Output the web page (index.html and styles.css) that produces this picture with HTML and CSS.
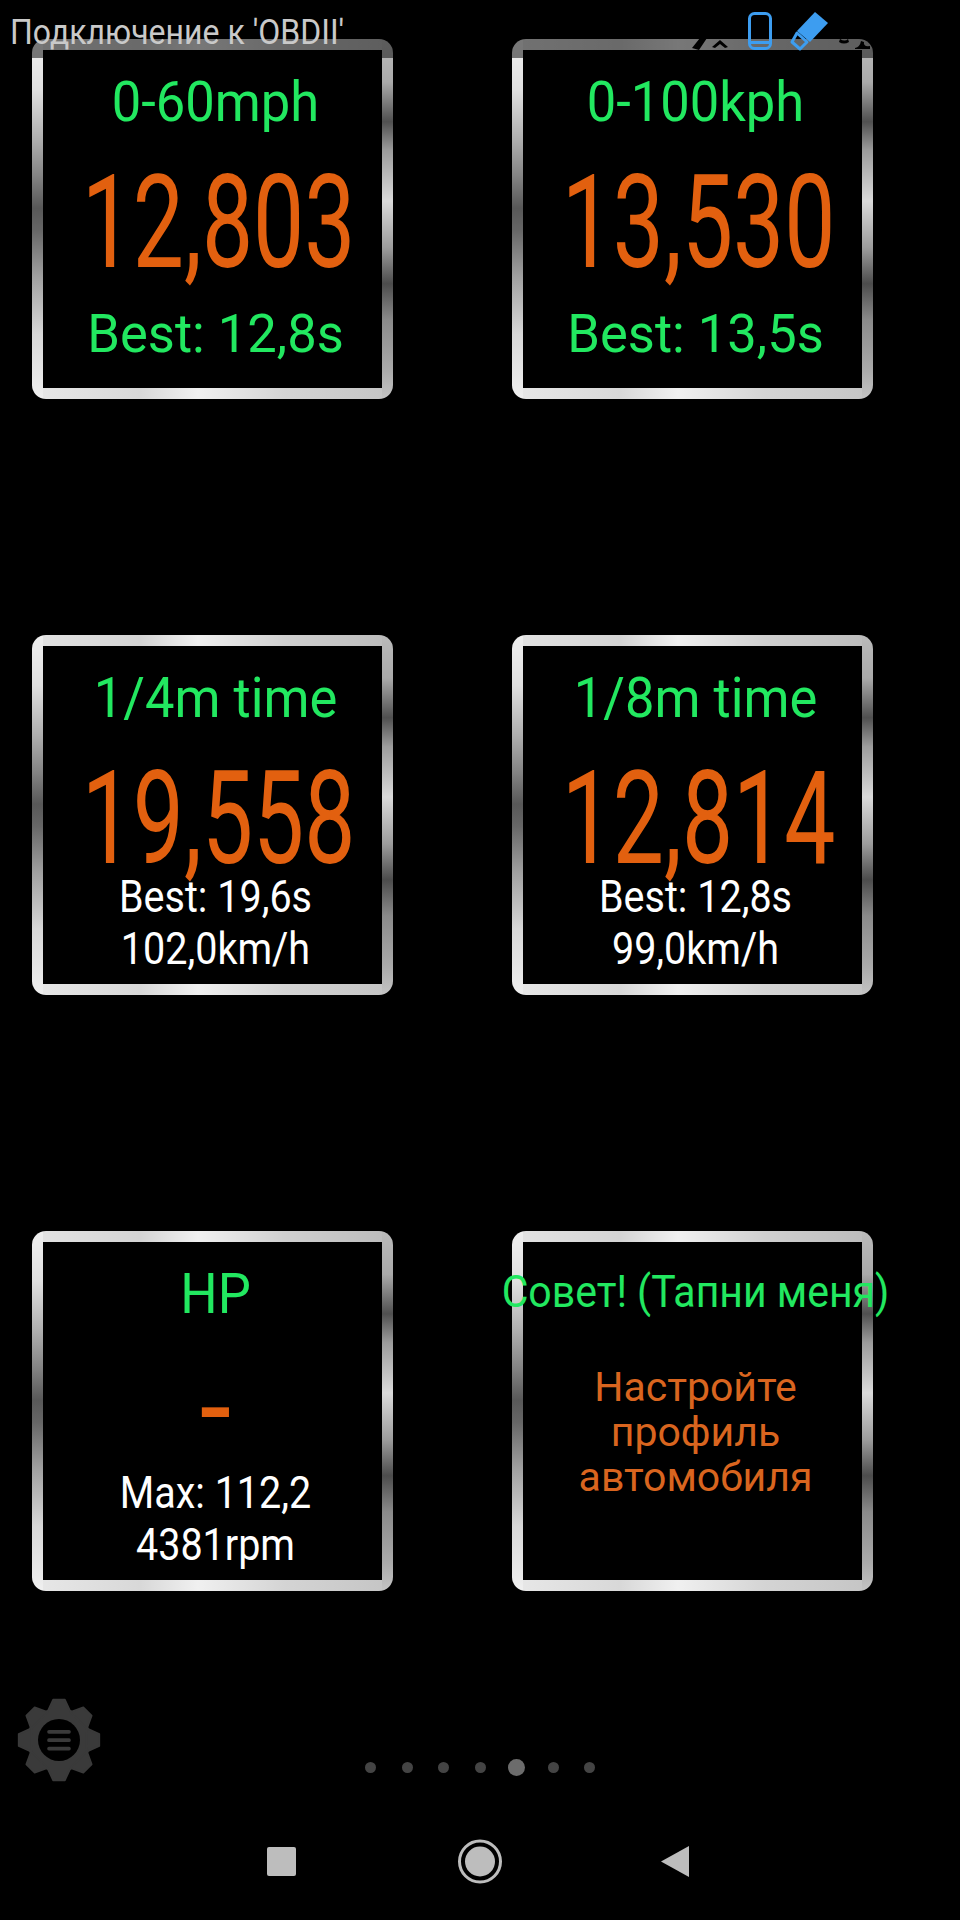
FILE: index.html
```html
<!DOCTYPE html>
<html lang="ru">
<head>
<meta charset="utf-8">
<title>Dyno</title>
<link rel="stylesheet" href="styles.css">
</head>
<body>
<div class="page">
  <header class="status">
    <span class="status-text">Подключение к 'OBDII'</span>
    <svg class="status-icons" viewBox="0 0 190 58" aria-hidden="true">
      <path class="glyph-black" d="M2 48 10 38h7l-8 12zM22 47l8-7 8 7-3 1-5-4-5 4z"/>
      <path class="glyph-black" d="M150 39q5 3 8 0l1 3q-5 3-10 0zM165 48q5-1 6-7l3 1q-1 5 6 4v3h-15z"/>
      <rect class="phone" x="59.5" y="13.5" width="21" height="35" rx="5"/>
      <rect class="icon-fill" x="60" y="41" width="20" height="3"/>
      <path class="icon-fill" d="M125 12 138 23 120 42 107 31z"/>
      <path class="usb-tip" d="M107 33 117 42 110 49 102 42z"/>
    </svg>
  </header>
  <main class="grid">
    <section class="card"><div class="face">
      <div class="title">0-60mph</div><div class="big">12,803</div><div class="best">Best: 12,8s</div>
    </div></section>
    <section class="card"><div class="face">
      <div class="title">0-100kph</div><div class="big">13,530</div><div class="best">Best: 13,5s</div>
    </div></section>
    <section class="card"><div class="face">
      <div class="title">1/4m time</div><div class="big">19,558</div><div class="sub first">Best: 19,6s</div><div class="sub">102,0km/h</div>
    </div></section>
    <section class="card"><div class="face">
      <div class="title">1/8m time</div><div class="big">12,814</div><div class="sub first">Best: 12,8s</div><div class="sub">99,0km/h</div>
    </div></section>
    <section class="card"><div class="face">
      <div class="title">HP</div><div class="big dash">-</div><div class="sub first">Max: 112,2</div><div class="sub">4381rpm</div>
    </div></section>
    <section class="card"><div class="face">
      <div class="tip-title">Совет! (Тапни меня)</div>
      <div class="tip-body">Настройте<br>профиль<br>автомобиля</div>
    </div></section>
  </main>
  <div class="pager-row">
    <svg class="gear" viewBox="0 0 100 100" aria-hidden="true">
      <defs><polygon id="tooth" points="36,17 43,2 57,2 64,17"/></defs>
      <g class="gear-body">
        <circle cx="50" cy="50" r="37"/>
        <use href="#tooth"/>
        <use href="#tooth" transform="rotate(45 50 50)"/>
        <use href="#tooth" transform="rotate(90 50 50)"/>
        <use href="#tooth" transform="rotate(135 50 50)"/>
        <use href="#tooth" transform="rotate(180 50 50)"/>
        <use href="#tooth" transform="rotate(225 50 50)"/>
        <use href="#tooth" transform="rotate(270 50 50)"/>
        <use href="#tooth" transform="rotate(315 50 50)"/>
      </g>
      <circle class="gear-hole" cx="50" cy="50" r="25"/>
      <rect class="gear-bar" x="36" y="38" width="28" height="4.5" rx="2"/>
      <rect class="gear-bar" x="36" y="48" width="28" height="4.5" rx="2"/>
      <rect class="gear-bar" x="36" y="58" width="28" height="4.5" rx="2"/>
    </svg>
    <div class="dots">
      <i class="dot"></i><i class="dot"></i><i class="dot"></i><i class="dot"></i><i class="dot active"></i><i class="dot"></i><i class="dot"></i>
    </div>
  </div>
  <nav class="nav">
    <svg class="nav-icon" viewBox="0 0 48 48" aria-hidden="true"><rect class="nav-fill" x="9" y="9" width="29" height="29" rx="2"/></svg>
    <svg class="nav-icon" viewBox="0 0 48 48" aria-hidden="true"><circle class="nav-ring" cx="24" cy="23.5" r="20.5"/><circle class="nav-fill" cx="24" cy="23.5" r="15"/></svg>
    <svg class="nav-icon" viewBox="0 0 48 48" aria-hidden="true"><path class="nav-fill" d="M7 23.5 35 8v31z"/></svg>
  </nav>
</div>
</body>
</html>
```

FILE: styles.css
```css
* { box-sizing: border-box; }
html, body { margin: 0; background: #000; }
body { font-family: Roboto, "Noto Sans", sans-serif; }
.page { position: relative; width: 960px; height: 1920px; overflow: hidden; background: #000; display: flex; flex-direction: column; }

.status { position: absolute; top: 0; left: 0; width: 960px; height: 58px; background: rgba(0,0,0,.5); display: flex; z-index: 2; }
.status-text { margin: 12px 0 0 10px; font-size: 32px; line-height: 40px; color: #c9c9c9; white-space: nowrap; transform: scaleY(1.07); transform-origin: left center; height: 40px; }
.status-icons { position: absolute; left: 690px; top: 0; width: 190px; height: 58px; }
.glyph-black { fill: #000; }
.phone { fill: none; stroke: #3d9df0; stroke-width: 3; }
.icon-fill { fill: #3d9df0; }
.usb-tip { fill: none; stroke: #3d9df0; stroke-width: 3; stroke-linejoin: round; }

.grid { display: grid; grid-template-columns: 361px 361px; column-gap: 119px; row-gap: 236px; padding: 39px 0 0 32px; }
.card {
  height: 360px; padding: 11px; border-radius: 14px;
  background:
    linear-gradient(180deg, #f0f0f0 0%, #e0e0e0 14%, #aeaeae 28%, #848484 38%, #585858 47%, #666 53%, #a0a0a0 66%, #d8d8d8 82%, #f0f0f0 100%) left / 11px 100% no-repeat,
    linear-gradient(180deg, #bbb 0%, #aaa 12%, #505050 23%, #9c9c9c 31%, #dadada 45%, #9c9c9c 58%, #4c4c4c 68%, #8a8a8a 78%, #aaa 92%, #c4c4c4 100%) right / 11px 100% no-repeat,
    linear-gradient(90deg, #e4e4e4 0%, #d4d4d4 30%, #f0f0f0 46%, #d0d0d0 70%, #bbb 100%) top / 100% 11px no-repeat,
    linear-gradient(90deg, #e8e8e8 0%, #d8d8d8 30%, #f0f0f0 46%, #d4d4d4 70%, #c4c4c4 100%) bottom / 100% 11px no-repeat;
}
.face { height: 338px; background: #000; border-radius: 3px; display: flex; flex-direction: column; align-items: center; padding: 0 0 0 6px; white-space: nowrap; }

.title { margin-top: 22px; font-size: 52.5px; line-height: 60px; color: #22e860; transform: scaleY(1.07); }
.big { margin: 41px 0 0 6px; font-size: 91px; line-height: 100px; color: #e2600f; transform: scaleY(1.43); }
.big.dash { margin-left: 0; transform: translateY(-7px) scale(1.25, 1.43); }
.best { margin-top: 31px; font-size: 52.5px; line-height: 60px; color: #22e860; transform: scaleY(1.02); }
.sub { font-size: 39.5px; line-height: 52px; color: #fff; transform: scaleY(1.13); }
.sub.first { margin-top: 2px; }
.tip-title { margin-top: 26px; font-size: 41px; line-height: 48px; color: #22e860; transform: scaleY(1.1); }
.tip-body { margin-top: 49px; font-size: 41px; line-height: 45px; color: #d9651f; text-align: center; }

.pager-row { display: grid; grid-template-columns: 1fr auto 1fr; margin-top: 107px; height: 84px; }
.gear { width: 84px; height: 84px; margin-left: 17px; }
.gear-body { fill: #3a3a3a; stroke: #3a3a3a; stroke-width: 2; stroke-linejoin: round; }
.gear-hole { fill: #000; }
.gear-bar { fill: #3a3a3a; }
.dots { display: flex; align-items: center; gap: 25.5px; height: 18px; align-self: end; margin-bottom: 6px; }
.dot { width: 11px; height: 11px; border-radius: 50%; background: #444; }
.dot.active { width: 17px; height: 17px; margin: 0 -3px; background: #6c6c6c; }

.nav { display: flex; justify-content: center; gap: 150px; margin-top: 56px; }
.nav-icon { width: 48px; height: 48px; }
.nav-fill { fill: #bdbdbd; }
.nav-ring { fill: none; stroke: #bdbdbd; stroke-width: 3; }
```
